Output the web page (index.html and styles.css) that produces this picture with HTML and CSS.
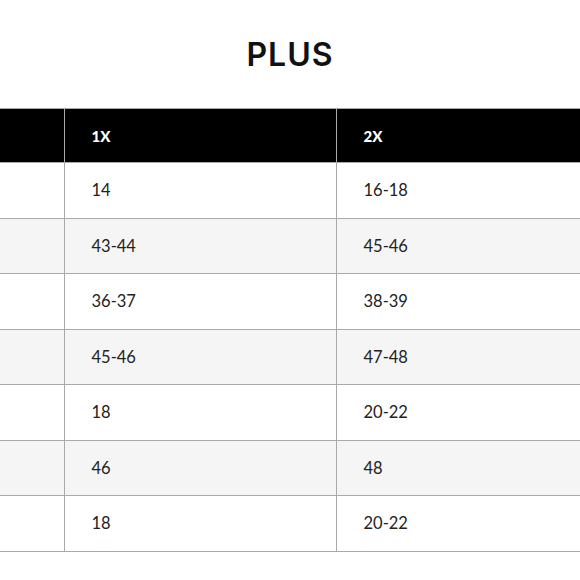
FILE: index.html
```html
<!DOCTYPE html>
<html>
<head>
<meta charset="utf-8">
<link rel="stylesheet" href="styles.css">
</head>
<body>
<h1 class="title">PLUS</h1>
<table class="sizes">
  <colgroup><col class="c0"><col class="c1"><col class="c2"></colgroup>
  <thead>
    <tr><th></th><th>1X</th><th>2X</th></tr>
  </thead>
  <tbody>
    <tr><td></td><td>14</td><td>16-18</td></tr>
    <tr><td></td><td>43-44</td><td>45-46</td></tr>
    <tr><td></td><td>36-37</td><td>38-39</td></tr>
    <tr><td></td><td>45-46</td><td>47-48</td></tr>
    <tr><td></td><td>18</td><td>20-22</td></tr>
    <tr><td></td><td>46</td><td>48</td></tr>
    <tr><td></td><td>18</td><td>20-22</td></tr>
  </tbody>
</table>
</body>
</html>
```
FILE: styles.css
```css
html, body {
  margin: 0;
  padding: 0;
  background: #fff;
}
body {
  font-family: "Lato", "Open Sans", sans-serif;
  color: #222;
}
.title {
  margin: 0;
  padding-top: 37px;
  height: 72px;
  box-sizing: border-box;
  text-align: center;
  font-family: "Inter", "Lato", sans-serif;
  font-size: 32px;
  line-height: 36px;
  font-weight: 600;
  letter-spacing: 1px;
  color: #111;
}
.sizes {
  width: 100%;
  table-layout: fixed;
  border-collapse: collapse;
  margin-top: 36px;
}
.c0 { width: 64px; }
.c1 { width: 272px; }
.sizes th, .sizes td {
  text-align: left;
  padding: 0 0 0 27px;
  border-top: 1px solid #a9a9a9;
  border-bottom: 1px solid #a9a9a9;
}
.sizes th + th, .sizes td + td {
  border-left: 1px solid #a9a9a9;
}
.sizes th {
  background: #000;
  color: #fff;
  height: 53px;
  font-size: 15px;
  font-weight: 900;
}
.sizes td {
  height: 54.5px;
  font-size: 16.5px;
  color: #222;
}
.sizes tbody tr:nth-child(even) td {
  background: #f5f5f5;
}
```
